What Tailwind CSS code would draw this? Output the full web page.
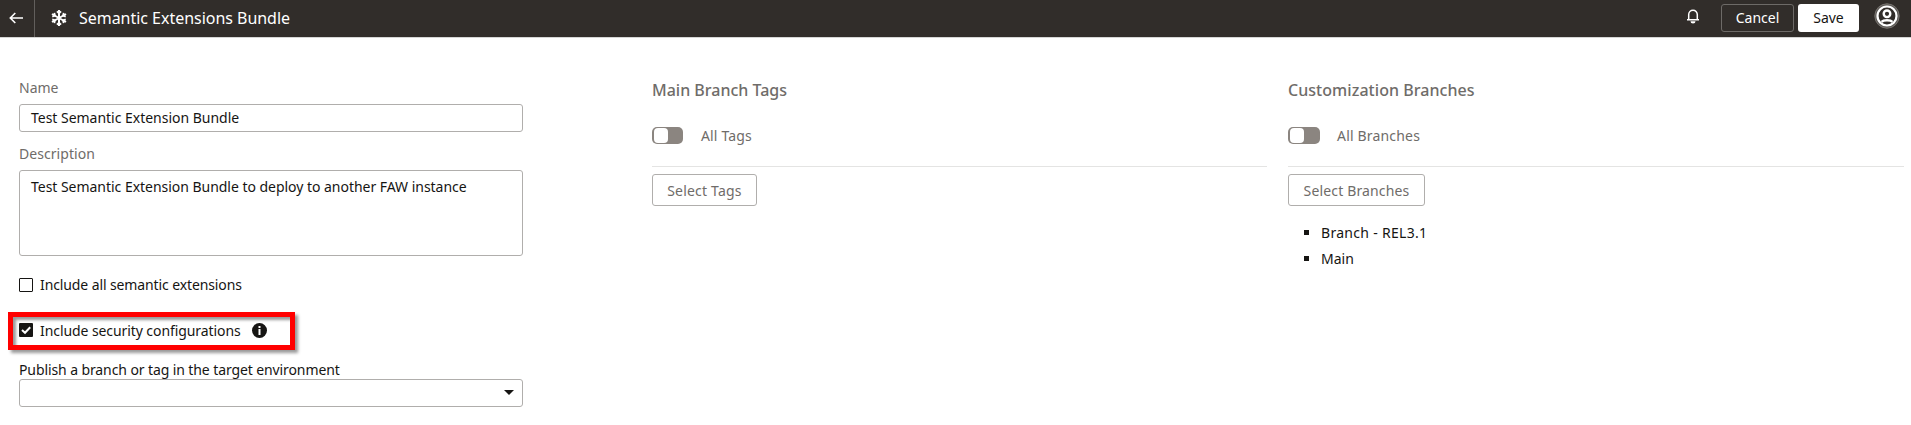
<!DOCTYPE html>
<html lang="en">
<head>
<meta charset="utf-8">
<title>Semantic Extensions Bundle</title>
<script src="https://cdn.jsdelivr.net/npm/@tailwindcss/browser@4"></script>
</head>
<body class="h-[425px] overflow-hidden bg-white font-['Noto_Sans',sans-serif] text-sm leading-5 text-[#161513] whitespace-nowrap">
<header class="flex h-[38px] items-start border-b border-[#d5d5d4] bg-[#312d2a] text-white">
  <button class="flex h-[37px] w-[35px] items-center border-r border-[#625f5c] pl-[9px]" aria-label="Back">
    <svg class="mb-px h-3 w-[15px]" viewBox="0 0 15 12" fill="none" stroke="currentColor" stroke-width="1.600"><path d="M14 6H1.500M6.300 1 1.300 6l5 5"/></svg>
  </button>
  <svg class="mt-[10px] ml-4 size-4" viewBox="0 0 16 16" fill="none" stroke="currentColor"><path stroke-width="2" d="M8 0v16M1 4l14 8M15 4 1 12"/><g stroke-width="1.800"><path id="fork" d="M5.900 1.400 8 3.300l2.100-1.900"/><use href="#fork" transform="rotate(60 8 8)"/><use href="#fork" transform="rotate(120 8 8)"/><use href="#fork" transform="rotate(180 8 8)"/><use href="#fork" transform="rotate(240 8 8)"/><use href="#fork" transform="rotate(300 8 8)"/></g></svg>
  <h1 class="mt-[6px] ml-3 text-base leading-6 tracking-[-0.03px]">Semantic Extensions Bundle</h1>
  <svg class="mt-[9px] ml-auto h-[15px] w-[14px]" viewBox="0 0 14 15" fill="none" stroke="currentColor" stroke-width="1.500"><path d="M1 10.800h12M2.700 10.500V5.500a4.300 4.300 0 0 1 8.600 0v5"/><path d="M4.500 12.200a2.500 2.200 0 0 0 5 0z" fill="currentColor" stroke="none"/></svg>
  <button class="mt-1 ml-[21px] h-7 w-[73px] rounded-[3px] border border-[#6d6a67]">Cancel</button>
  <button class="mt-1 ml-1 h-7 w-[61px] rounded-[3px] bg-white text-[#161513]">Save</button>
  <svg class="mt-[3px] mr-[11px] ml-[15px] size-[26px]" viewBox="0 0 26 26" fill="none" stroke="#fff"><circle cx="13" cy="13" r="12.200" fill="#5c5956" stroke="#77736f"/><circle cx="13" cy="13" r="9.500" fill="#312d2a" stroke-width="2.200"/><circle cx="13" cy="10.800" r="3.300" stroke-width="2.400"/><path stroke-width="2.400" d="M7.500 18.800c2-2 9-2 11 0"/></svg>
</header>
<main class="flex pl-[19px]">
  <section class="w-[504px] pt-[40px]">
    <label class="block h-[26px] text-[#6f6c69]">Name</label>
    <div class="flex h-7 items-center rounded-[3px] border border-[#b0aeac] pl-[11px]"><span class="tracking-[-0.02px]">Test Semantic Extension Bundle</span></div>
    <label class="mt-3 block h-[26px] tracking-[0.05px] text-[#6f6c69]">Description</label>
    <div class="h-[86px] rounded-[3px] border border-[#b0aeac] pt-[6px] pl-[11px]"><span class="tracking-[-0.03px]">Test Semantic Extension Bundle to deploy to another FAW instance</span></div>
    <div class="mt-[19px] flex h-5 items-center gap-[7px]"><i class="size-[14px] rounded-[1px] border border-[#161513]"></i><span class="tracking-[-0.11px]">Include all semantic extensions</span></div>
    <div class="mt-[17px] -ml-[11px] flex h-[38px] w-[287px] items-center border-[5px] border-[#ff0000] pl-[6px] shadow-[3px_3px_3px_rgba(0,0,0,0.4),inset_3px_3px_3px_rgba(0,0,0,0.4)]">
      <svg class="mb-[2px] size-[14px]" viewBox="0 0 14 14"><rect width="14" height="14" rx="1" fill="#161513"/><path d="m3 7 3 2.800 5.200-5.600" fill="none" stroke="#fff" stroke-width="2"/></svg>
      <span class="ml-[7px] tracking-[-0.08px]">Include security configurations</span>
      <svg class="mb-[2px] ml-[11px] size-[15px]" viewBox="0 0 15 15"><circle cx="7.500" cy="7.500" r="7.500" fill="#161513"/><path fill="#fff" d="M6.500 3h2v2h-2zM6.500 6h2v6h-2z"/></svg>
    </div>
    <label class="mt-[10px] block h-[19px] tracking-[-0.1px]">Publish a branch or tag in the target environment</label>
    <div class="flex h-7 items-center justify-end rounded-[3px] border border-[#b0aeac] pr-2"><svg class="mb-[2px] h-[5px] w-[10px]" viewBox="0 0 10 5"><path d="M0 0h10L5 5z" fill="#161513"/></svg></div>
  </section>
  <section class="ml-[129px] w-[615px] pt-[40px] text-[#6f6c69]">
    <h2 class="h-6 text-base leading-6 font-medium">Main Branch Tags</h2>
    <div class="mt-[25px] flex h-[17px] items-center"><i class="flex h-[17px] w-[31px] rounded-[5px] bg-[#8b8580] p-px pl-[2px]"><i class="h-[15px] w-[14px] rounded-[4px] bg-white"></i></i><span class="ml-[18px] tracking-[0.15px]">All Tags</span></div>
    <div class="mt-[22px] border-t border-[#e4e4e3]"></div>
    <button class="mt-[7px] h-8 w-[105px] rounded-[3px] border border-[#b0aeac] pt-[2px] tracking-[0.2px]">Select Tags</button>
  </section>
  <section class="ml-[21px] w-[616px] pt-[40px] text-[#6f6c69]">
    <h2 class="h-6 text-base leading-6 font-medium tracking-[0.05px]">Customization Branches</h2>
    <div class="mt-[25px] flex h-[17px] items-center"><i class="flex h-[17px] w-[32px] rounded-[5px] bg-[#8b8580] p-px pl-[2px]"><i class="h-[15px] w-[14px] rounded-[4px] bg-white"></i></i><span class="ml-[17px] tracking-[0.18px]">All Branches</span></div>
    <div class="mt-[22px] border-t border-[#e4e4e3]"></div>
    <button class="mt-[7px] h-8 w-[137px] rounded-[3px] border border-[#b0aeac] pt-[2px] tracking-[0.15px]">Select Branches</button>
    <ul class="mt-[14px] pl-4 leading-[26px] text-[#161513]">
      <li class="flex items-center gap-3"><i class="mb-px size-[5px] bg-[#161513]"></i><span class="tracking-[0.3px]">Branch - REL3.1</span></li>
      <li class="flex items-center gap-3"><i class="mb-px size-[5px] bg-[#161513]"></i><span>Main</span></li>
    </ul>
  </section>
</main>
</body>
</html>
